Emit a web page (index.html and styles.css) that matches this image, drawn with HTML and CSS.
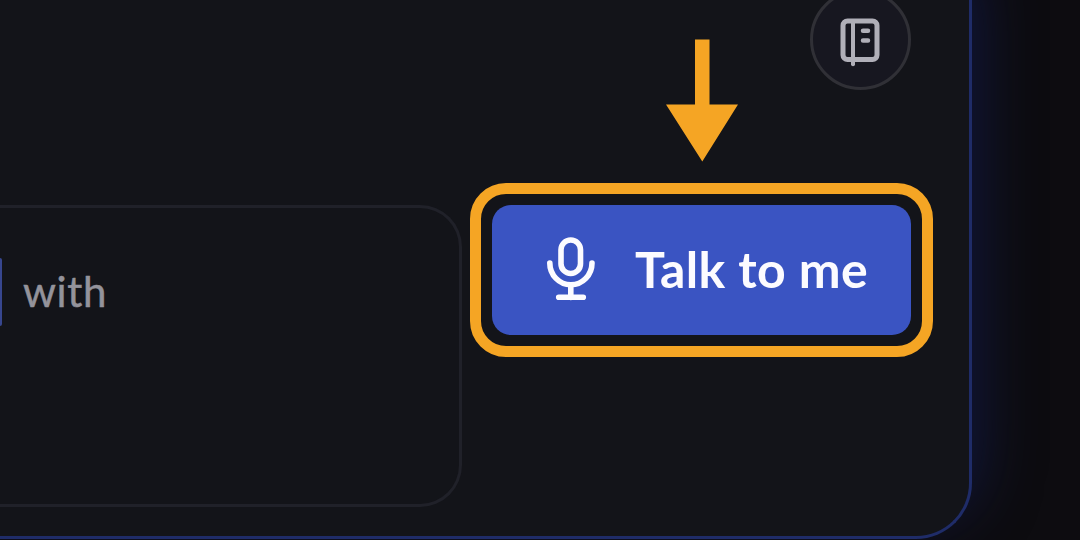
FILE: index.html
```html
<!DOCTYPE html>
<html lang="en">
<head>
<meta charset="utf-8">
<title>Talk to me</title>
<link rel="stylesheet" href="styles.css">
</head>
<body>
<main class="panel">
  <header class="toolbar">
    <button class="round-button" aria-label="Notebook">
      <svg class="notebook" width="44" height="52" viewBox="0 0 44 52" fill="none" stroke-linecap="round" stroke-linejoin="round">
        <rect x="5" y="4" width="34" height="38.500" rx="4.5" stroke-width="5"/>
        <path d="M15 4V47.200" stroke-width="4"/>
        <path d="M25 13.800h5M25 23.500h5" stroke-width="4.5"/>
      </svg>
    </button>
  </header>
  <section class="content">
    <div class="card">
      <span class="chip"></span>
      <span class="prompt">with</span>
    </div>
    <div class="action">
      <svg class="arrow" width="74" height="124" viewBox="0 0 74 124"><path d="M30 1.500h14.500v65H73L37.300 123.500 1 66.500h29z"/></svg>
      <button class="talk">
        <svg class="mic" width="50" height="66" viewBox="0 0 50 66" fill="none" stroke-width="5.600" stroke-linecap="round">
          <rect x="15" y="4" width="19.500" height="33.500" rx="9.750"/>
          <path d="M3.800 27a21.100 21.800 0 0 0 42.200 0M24.800 49v12.500M12.700 61.300h24.600"/>
        </svg>
        <span class="talk-label">Talk to me</span>
      </button>
      <span class="ring"></span>
    </div>
  </section>
</main>
</body>
</html>
```
FILE: styles.css
```css
* { box-sizing: border-box; }
body {
  margin: 0;
  height: 540px;
  overflow: hidden;
  background: #0d0c10;
  font-family: Lato, "Liberation Sans", sans-serif;
}
button { padding: 0; border: 0; font: inherit; }
.panel {
  width: 972px;
  height: 539px;
  background: #131419;
  border: solid #1f2c68;
  border-width: 0 3px 3px 0;
  border-bottom-right-radius: 56px;
  box-shadow: 0 -24px 60px 6px rgba(20, 31, 92, 0.62);
}
.toolbar {
  height: 205px;
  display: flex;
  justify-content: flex-end;
  padding-right: 58px;
}
.round-button {
  display: flex;
  justify-content: center;
  align-items: center;
  width: 101px;
  height: 101px;
  margin-top: -11px;
  border: 3px solid #303036;
  border-radius: 50%;
  background: #171720;
}
.notebook { stroke: #b0afb8; margin-top: 7px; margin-right: 1px; }
.content { display: flex; align-items: flex-start; gap: 30px; }
.card {
  display: flex;
  align-items: flex-start;
  gap: 21px;
  width: 462px;
  height: 302px;
  padding-top: 50px;
  border: solid #202129;
  border-width: 3px 3px 3px 0;
  border-radius: 0 42px 42px 0;
}
.chip {
  width: 2px;
  height: 68px;
  background: #37468e;
  border-radius: 0 2px 2px 0;
}
.prompt {
  padding-top: 7px;
  color: #94939b;
  font-size: 42px;
  line-height: 52px;
  letter-spacing: 0.6px;
  -webkit-text-stroke: 0.5px #94939b;
}
.action { position: relative; }
.talk {
  display: flex;
  align-items: center;
  gap: 39px;
  width: 419px;
  height: 130px;
  padding-left: 54px;
  border-radius: 19px;
  background: #3a54c2;
  color: #fcfbff;
}
.mic { stroke: #fcfbff; margin-top: -2px; }
.talk-label {
  margin-top: -2px;
  font-size: 50px;
  font-weight: 700;
  line-height: 60px;
  letter-spacing: 0.4px;
  white-space: nowrap;
}
.ring {
  position: absolute;
  inset: -22px;
  border: 11px solid #f5a524;
  border-radius: 36px;
  pointer-events: none;
}
.arrow {
  position: absolute;
  left: 173px;
  top: -167px;
  fill: #f5a524;
}
```
